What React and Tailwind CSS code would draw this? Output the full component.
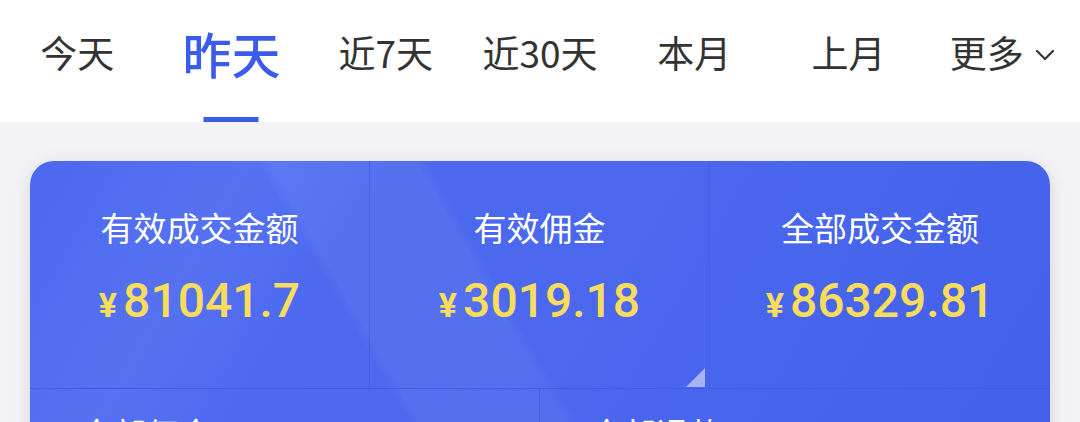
import React from "react";

const tabs = ["今天", "昨天", "近7天", "近30天", "本月", "上月", "更多"];

function Cell({ label, value, className = "", children }) {
  return (
    <div className={"relative flex flex-col items-center " + className}>
      <div className="text-[33px] leading-[40px] text-white">{label}</div>
      {value && (
        <div className="mt-[32px] flex items-baseline text-[#f8dc5b] font-medium" style={{ fontFamily: 'Roboto, "Liberation Sans", Arial, sans-serif' }}>
          <span className="text-[34px] font-bold mr-[6px]">¥</span>
          <span className="text-[48px] leading-[44px]">{value}</span>
        </div>
      )}
      {children}
    </div>
  );
}

export default function App() {
  return (
    <div
      className="w-[1080px] h-[422px] overflow-hidden bg-[#f3f3f5]"
      style={{ fontFamily: '"Noto Sans CJK SC", "Noto Sans", sans-serif' }}
    >
      <div className="h-[122px] bg-white flex">
        {tabs.map((t, i) => {
          const active = i === 1;
          return (
            <div key={t} className="flex-1 relative flex items-center justify-center pb-[16px]">
              <span
                className={
                  active
                    ? "text-[49px] text-[#3b5bea] font-medium"
                    : "text-[37px] text-[#333333]"
                }
              >
                {t}
              </span>
              {i === 6 && (
                <svg width="22" height="14" viewBox="0 0 22 14" className="ml-[10px] mt-[4px]">
                  <path d="M3 3 L11 11 L19 3" fill="none" stroke="#333" strokeWidth="2.2" strokeLinecap="round" strokeLinejoin="round" />
                </svg>
              )}
              {active && (
                <div className="absolute bottom-0 left-1/2 -translate-x-1/2 w-[55px] h-[5px] bg-[#3b5bea]" />
              )}
            </div>
          );
        })}
      </div>

      <div className="px-[30px] pt-[39px]">
        <div className="relative rounded-[24px] overflow-hidden shadow-[0_4px_18px_rgba(0,0,0,0.12)] bg-[linear-gradient(120deg,#4b68ef_0%,#5672f2_18%,#4c69ef_30%,#4a67ee_55%,#4260ea_100%)]">
          <div className="pointer-events-none absolute inset-0 bg-[linear-gradient(60deg,transparent_0%,transparent_35%,rgba(255,255,255,0.05)_36%,rgba(255,255,255,0.05)_48%,transparent_49%,transparent_100%)]" />
          <div className="relative grid grid-cols-3 h-[228px] border-b border-[#3f5ae3]">
            <Cell label="有效成交金额" value="81041.7" className="pt-[46px] border-r border-[#4460e6]" />
            <Cell label="有效佣金" value="3019.18" className="pt-[46px] border-r border-[#4460e6]">
              <svg width="19" height="19" viewBox="0 0 19 19" className="absolute right-[4px] bottom-[1px]">
                <path d="M19 0 L19 19 L0 19 Z" fill="#a7b3f7" />
              </svg>
            </Cell>
            <Cell label="全部成交金额" value="86329.81" className="pt-[46px]" />
          </div>
          <div className="relative grid grid-cols-2 h-[120px]">
            <div className="border-r border-[#4460e6] pl-[50px] pt-[24px] text-[33px] leading-[40px] text-white">全部佣金</div>
            <div className="pl-[50px] pt-[24px] text-[33px] leading-[40px] text-white">全部退款</div>
          </div>
        </div>
      </div>
    </div>
  );
}
